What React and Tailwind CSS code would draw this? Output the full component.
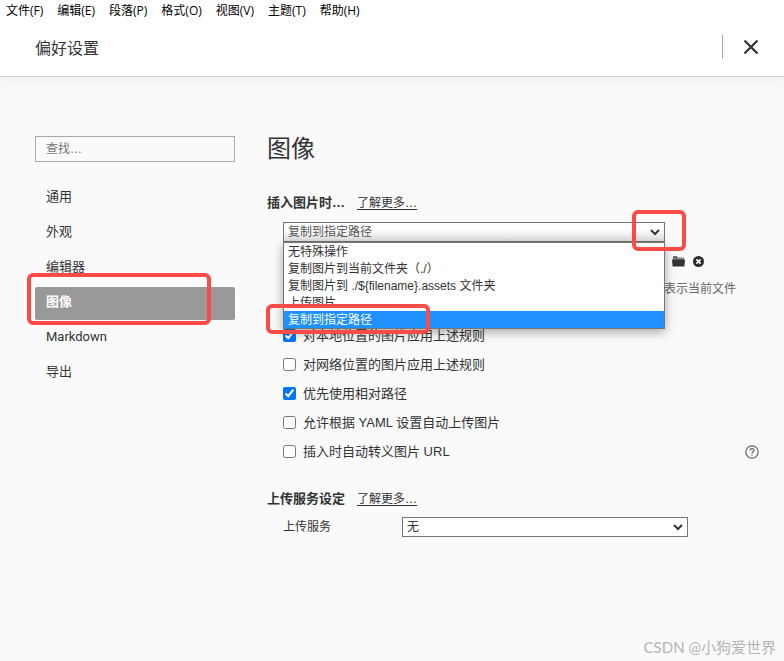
import React from "react";

const MENUS = ["文件(F)", "编辑(E)", "段落(P)", "格式(O)", "视图(V)", "主题(T)", "帮助(H)"];
const SECTIONS = ["通用", "外观", "编辑器", "图像", "Markdown", "导出"];
const INSERT_ACTIONS = [
  "无特殊操作",
  "复制图片到当前文件夹（./）",
  "复制图片到 ./${filename}.assets 文件夹",
  "上传图片",
  "复制到指定路径",
];
const RULES = [
  { id: "local", label: "对本地位置的图片应用上述规则", checked: true },
  { id: "network", label: "对网络位置的图片应用上述规则", checked: false },
  { id: "relative", label: "优先使用相对路径", checked: true },
  { id: "yaml", label: "允许根据 YAML 设置自动上传图片", checked: false },
  { id: "escape", label: "插入时自动转义图片 URL", checked: false, help: true },
];

function Chevron() {
  return (
    <svg
      className="pointer-events-none absolute top-1/2 right-1 h-3 w-3 -translate-y-1/2"
      viewBox="0 0 12 12"
      fill="none"
      stroke="#333"
      strokeWidth="2"
      aria-hidden="true"
    >
      <path d="M2 4 L6 8 L10 4" />
    </svg>
  );
}

function Highlight({ className }) {
  return (
    <span
      aria-hidden="true"
      className={"pointer-events-none absolute z-20 rounded-md border-4 border-[#f94c48] " + className}
    />
  );
}

function SectionTitle({ children }) {
  return (
    <div className="flex h-5 items-center gap-3">
      <h2 className="text-[13px] leading-5 font-bold">{children}</h2>
      <a href="#more" className="text-xs leading-5 underline underline-offset-2">
        了解更多…
      </a>
    </div>
  );
}

function Header() {
  return (
    <header className="relative border-b border-[#cfcfcf] bg-white shadow-[0_2px_14px_rgba(0,0,0,0.06)]">
      <nav className="flex h-[22px] items-center gap-3.5 px-1.5 font-['Open_Sans','Noto_Sans_CJK_SC',sans-serif] text-xs text-black">
        {MENUS.map((menu) => (
          <button key={menu} type="button" className="whitespace-nowrap">
            {menu}
          </button>
        ))}
      </nav>
      <div className="flex h-[54px] items-center justify-between pr-[25px] pl-[35px]">
        <h1 className="text-base leading-6">偏好设置</h1>
        <div className="flex items-center gap-5 pb-1">
          <span className="h-6 w-px bg-[#aaa]" />
          <button type="button" aria-label="关闭" className="h-4 w-4">
            <svg viewBox="0 0 16 16" fill="none" stroke="#333" strokeWidth="2.2" aria-hidden="true">
              <path d="M1.5 1.5 L14.5 14.5 M14.5 1.5 L1.5 14.5" />
            </svg>
          </button>
        </div>
      </div>
    </header>
  );
}

function Sidebar() {
  return (
    <aside className="w-[200px] shrink-0">
      <input
        type="search"
        aria-label="查找"
        placeholder="查找…"
        className="block h-[26px] w-full border border-[#a9a9a9] bg-transparent px-2.5 text-xs placeholder:text-[#777]"
      />
      <nav className="mt-5 flex flex-col gap-0.5 font-[Roboto,'Noto_Sans_CJK_SC',sans-serif] text-[13px] leading-5">
        {SECTIONS.map((name) =>
          name === "图像" ? (
            <a key={name} href="#image" className="relative h-[33px] rounded-xs bg-[#999] px-[11px] pt-[5px] font-bold text-white">
              {name}
              <Highlight className="-top-3.5 -left-2 h-[52px] w-[184px]" />
            </a>
          ) : (
            <a key={name} href="#section" className="h-[33px] px-[11px] pt-[5px]">
              {name}
            </a>
          )
        )}
      </nav>
    </aside>
  );
}

function InsertSelect() {
  return (
    <div className="relative w-[382px]">
      <select
        aria-label="插入图片时"
        defaultValue="复制到指定路径"
        className="block h-5 w-full appearance-none border border-[#767676] bg-linear-to-b from-white from-30% to-[#e2e2e2] px-1 text-xs leading-4 text-[#555]"
      >
        {INSERT_ACTIONS.map((action) => (
          <option key={action}>{action}</option>
        ))}
      </select>
      <Chevron />
      <ul
        role="listbox"
        aria-label="插入图片时"
        className="absolute top-full left-0 z-10 w-full border border-[#767676] bg-white text-xs leading-[19px] shadow-[0_3px_10px_rgba(0,0,0,0.35)]"
      >
        {INSERT_ACTIONS.map((action, i) =>
          i === 4 ? (
            <li key={action} role="option" aria-selected="true" className="relative h-[17px] bg-[#1e90ff] px-1 text-white">
              {action}
              <Highlight className="-top-[7px] -left-[18px] h-[30px] w-[164px]" />
            </li>
          ) : (
            <li key={action} role="option" aria-selected="false" className="h-[17px] px-1">
              {action}
            </li>
          )
        )}
      </ul>
      <Highlight className="-top-3 -right-[21px] h-[41px] w-[54px]" />
    </div>
  );
}

function FolderRow() {
  return (
    <div className="mt-[9px] flex h-5 items-center justify-start gap-2 pl-[389px]">
      <button type="button" aria-label="选择文件夹">
        <svg className="h-[11px] w-[13px]" viewBox="0 0 13 11" aria-hidden="true">
          <path d="M1 0.5 H5 L6 1.5 H12 V4 H1 Z" fill="#888" />
          <path d="M1 0.5 H5 L5.6 1.6 H1 Z" fill="#333" />
          <path d="M0 3.5 H13 L12.4 10.5 H0.6 Z" fill="#333" />
        </svg>
      </button>
      <button type="button" aria-label="清除">
        <svg className="h-[11px] w-[11px]" viewBox="0 0 11 11" aria-hidden="true">
          <circle cx="5.5" cy="5.5" r="5.5" fill="#2b2b2b" />
          <path d="M3.4 3.4 L7.6 7.6 M7.6 3.4 L3.4 7.6" stroke="#fff" strokeWidth="1.8" />
        </svg>
      </button>
    </div>
  );
}

function Rule({ rule }) {
  return (
    <div className="flex h-[29px] items-center gap-[7px]">
      <input id={rule.id} type="checkbox" defaultChecked={rule.checked} className="h-[13px] w-[13px]" />
      <label htmlFor={rule.id} className="grow text-[13px] leading-5">
        {rule.label}
      </label>
      {rule.help && (
        <button type="button" aria-label="帮助">
          <svg className="h-3.5 w-3.5" viewBox="0 0 14 14" fill="none" stroke="#666" strokeWidth="1.2" aria-hidden="true">
            <circle cx="7" cy="7" r="6.2" />
            <path d="M5 5.6 C5 2.9 9 2.9 9 5.4 C9 6.8 7 6.9 7 8.5" />
            <path d="M7 9.6 V10.8" />
          </svg>
        </button>
      )}
    </div>
  );
}

export default function App() {
  return (
    <div className="relative min-h-screen bg-[#fafafa] font-['Liberation_Sans','Noto_Sans_CJK_SC',sans-serif] text-[#333]">
      <Header />
      <div className="flex gap-8 pt-[59px] pr-[25px] pl-[35px]">
        <Sidebar />
        <main className="min-w-0 grow">
          <h1 className="mb-[31px] text-2xl leading-[26px]">图像</h1>
          <SectionTitle>插入图片时…</SectionTitle>
          <div className="mt-[9px] pl-4">
            <InsertSelect />
            <FolderRow />
            <p className="mt-2 pl-[381px] text-xs leading-5 whitespace-nowrap text-[#666]">表示当前文件</p>
            <div className="mt-[22px]">
              {RULES.map((rule) => (
                <Rule key={rule.id} rule={rule} />
              ))}
            </div>
          </div>
          <div className="mt-[23px]">
            <SectionTitle>上传服务设定</SectionTitle>
          </div>
          <div className="mt-2 flex items-center pl-4">
            <label htmlFor="uploader" className="w-[119px] text-xs leading-5">
              上传服务
            </label>
            <div className="relative w-[286px]">
              <select
                id="uploader"
                className="block h-5 w-full appearance-none border border-[#767676] bg-white px-1 text-xs leading-4"
              >
                <option>无</option>
              </select>
              <Chevron />
            </div>
          </div>
        </main>
      </div>
      <div className="absolute right-2 bottom-1 font-[Lato,'Noto_Sans_CJK_SC',sans-serif] text-[15px] leading-5 text-[#b4b4b4]">
        CSDN @小狗爱世界
      </div>
    </div>
  );
}
